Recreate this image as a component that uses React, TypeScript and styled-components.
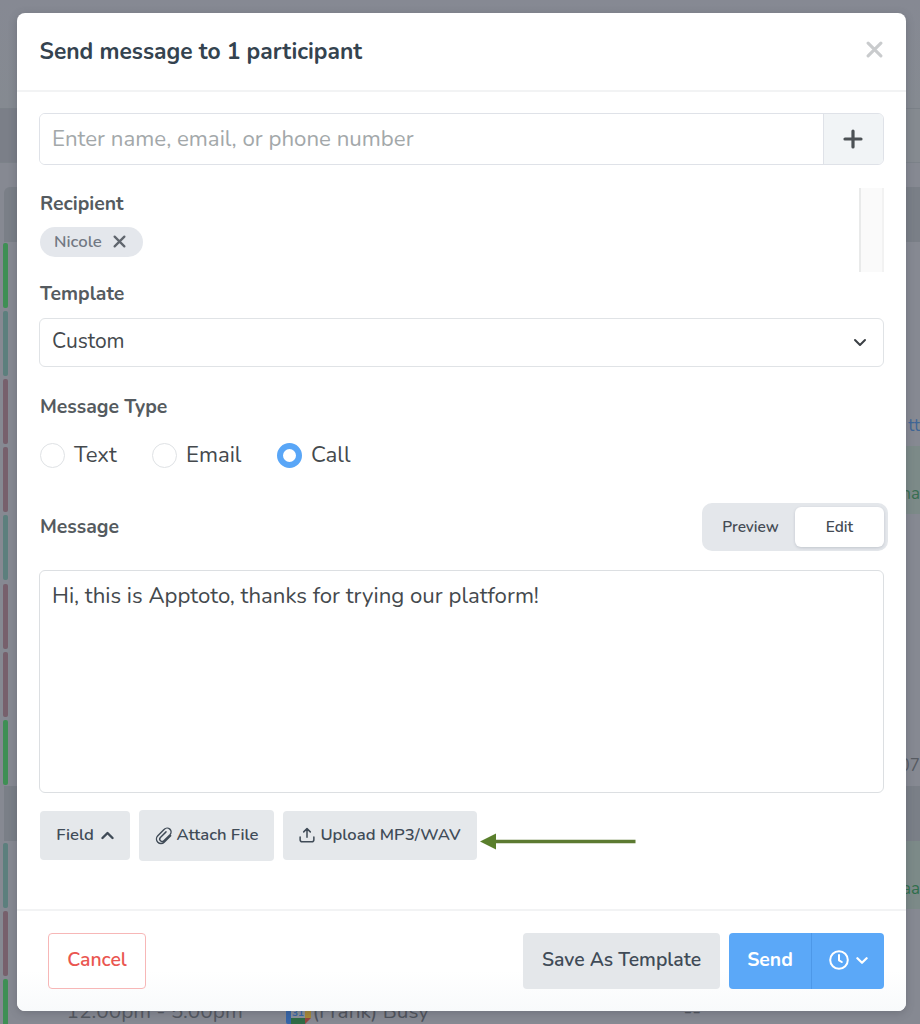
import React from 'react';
import styled, { createGlobalStyle } from 'styled-components';

const GlobalStyle = createGlobalStyle`
  * { box-sizing: border-box; }
  body { margin: 0; background: #868992; }
  body, button, input, textarea { font-family: Nunito, Lato, "Open Sans", sans-serif; }
  button { cursor: pointer; margin: 0; }
`;

const Page = styled.div`
  position: relative;
  width: 920px;
  height: 1024px;
  overflow: hidden;
  background: #868992;
`;

/* calendar page behind the dialog */
const Agenda = styled.div`
  display: flex;
  flex-direction: column;
  height: 1024px;
`;
const TopSpace = styled.div`
  flex: none;
  height: 108px;
  background: linear-gradient(180deg, #868993, #858a91);
`;
const Toolbar = styled.div`
  flex: none;
  height: 55px;
  background: linear-gradient(90deg, #7b7f88 0 500px, #858a90 500px);
  border-top: 1px solid #7b8188;
  border-bottom: 1px solid #7c8289;
`;
const Gap = styled.div`
  flex: none;
  height: 23.5px;
`;
const DayBand = styled.div<{ $first?: boolean }>`
  flex: none;
  height: 55px;
  margin-left: 4px;
  border-radius: ${p => (p.$first ? '6px 0 0 0' : 0)};
  background: #7a7f87;
`;
const EventRow = styled.div<{ $tint?: boolean }>`
  flex: none;
  display: flex;
  align-items: center;
  height: 68.1px;
  padding: 1px 0 1px 3px;
  background: ${p => (p.$tint ? 'linear-gradient(90deg, transparent 500px, #7c8a88 500px)' : 'transparent')};
`;
const Stripe = styled.i<{ $color: string }>`
  width: 4.5px;
  height: 65px;
  border-radius: 2px;
  background: ${p => p.$color};
`;
const EventTime = styled.span`
  width: 218px;
  padding-left: 59px;
  font-size: 20.8px;
  color: #53575f;
  white-space: nowrap;
`;
const EventTitle = styled.span`
  display: flex;
  align-items: center;
  gap: 2px;
  width: 398px;
  margin-left: 60px;
  font-size: 20.8px;
  color: #4f535b;
`;
const EventEnd = styled.span`
  font-size: 20.8px;
  color: #4f535b;
`;
const EventNote = styled.span<{ $color: string }>`
  margin: 27px 0 0 auto;
  font-size: 17px;
  color: ${p => p.$color};
  white-space: nowrap;
`;

/* dialog */
const Dialog = styled.section`
  position: absolute;
  left: 17px;
  top: 13px;
  width: 889px;
  height: 998px;
  display: flex;
  flex-direction: column;
  background: #fff;
  border-radius: 8px;
  box-shadow: 0 2px 8px rgba(60, 64, 72, 0.3);
`;
const Header = styled.header`
  flex: none;
  display: flex;
  align-items: center;
  justify-content: space-between;
  height: 79px;
  padding: 0 23px 3px;
  border-bottom: 2px solid #f2f3f4;
`;
const Title = styled.h1`
  margin: 3px 0 0 -0.5px;
  font-size: 22.8px;
  font-weight: 700;
  line-height: 30px;
  color: #34434f;
`;
const Close = styled.button`
  display: flex;
  padding: 0;
  margin: 0 0 2px 0;
  border: 0;
  background: none;
`;
const Body = styled.div`
  flex: none;
  display: flex;
  flex-direction: column;
  height: 817px;
  padding: 21px 22px 0 22px;
`;
const InputGroup = styled.div`
  display: flex;
  height: 52px;
  border: 1px solid #dfe2e8;
  border-radius: 6px;
  overflow: hidden;
`;
const NameInput = styled.input`
  flex: 1;
  min-width: 0;
  padding: 0 12px 1px;
  border: 0;
  outline: 0;
  font-size: 22.25px;
  color: #3e4347;
  &::placeholder { color: #a3a8aa; opacity: 1; }
`;
const AddButton = styled.button`
  display: flex;
  align-items: center;
  justify-content: center;
  width: 60px;
  padding: 0 1px 0 0;
  border: 0;
  border-left: 1px solid #dfe2e8;
  background: #f1f4f6;
`;
const Recipients = styled.div`
  display: flex;
  justify-content: space-between;
  height: 84px;
  margin-top: 23px;
`;
const ScrollTrack = styled.div`
  width: 25px;
  background: #fafafa;
  border-left: 2px solid #e9eaea;
  border-right: 2px solid #f2f2f2;
`;
const Label = styled.div`
  font-size: 19.4px;
  font-weight: 700;
  line-height: 26px;
  color: #555b60;
`;
const RecipientList = styled.div`
  padding: 3px 0 0 1px;
`;
const Chip = styled.span`
  display: flex;
  align-items: center;
  justify-content: space-between;
  width: 103px;
  height: 30px;
  margin-top: 10px;
  padding: 0 17px 2px 14px;
  border-radius: 15px;
  background: #e4e7ec;
  font-size: 16.8px;
  font-weight: 600;
  color: #717883;
`;
const TemplateField = styled.div`
  margin-top: 9px;
`;
const Indent = styled.div`
  padding-left: 1px;
`;
const Select = styled.button`
  display: flex;
  align-items: center;
  justify-content: space-between;
  width: 100%;
  height: 49px;
  margin-top: 11px;
  padding: 0 16px 3px 12px;
  border: 1px solid #e0e3e6;
  border-radius: 6px;
  background: #fff;
  font-size: 21px;
  color: #44494d;
  & > svg { margin-top: 2px; }
`;
const TypeField = styled.div`
  margin-top: 27px;
  padding-left: 1px;
`;
const Radios = styled.div`
  display: flex;
  height: 28px;
  margin-top: 21px;
`;
const Option = styled.label<{ $width: number }>`
  display: flex;
  align-items: center;
  gap: 9px;
  width: ${p => p.$width}px;
  font-size: 22.2px;
  line-height: 26px;
  color: #44494d;
`;
const Dot = styled.i<{ $checked?: boolean }>`
  flex: none;
  width: 25px;
  height: 25px;
  margin-top: 1px;
  border-radius: 50%;
  background: #fff;
  border: ${p => (p.$checked ? '6.5px solid #59a6f7' : '1px solid #dfe2e5')};
`;
const MessageHead = styled.div`
  display: flex;
  align-items: center;
  justify-content: space-between;
  height: 48px;
  margin: 34px -4px 0 1px;
`;
const Toggle = styled.div`
  display: flex;
  width: 186px;
  height: 48px;
  padding: 4px;
  border-radius: 10px;
  background: #e4e7eb;
`;
const ToggleItem = styled.button<{ $active?: boolean }>`
  width: 89px;
  padding: 0 0 2px;
  border: 0;
  border-radius: 6px;
  background: ${p => (p.$active ? '#fff' : 'transparent')};
  box-shadow: ${p => (p.$active ? '0 1px 3px rgba(60, 70, 90, 0.2)' : 'none')};
  font-size: 15.4px;
  font-weight: 600;
  color: #444b54;
`;
const MessageBox = styled.textarea`
  flex: none;
  display: block;
  width: 100%;
  height: 223px;
  margin: 19px 0 0;
  padding: 11px 12px;
  border: 1px solid #dcdfe2;
  border-radius: 6px;
  outline: 0;
  resize: none;
  font-size: 22.2px;
  line-height: 28px;
  color: #44494d;
`;
const Tools = styled.div`
  display: flex;
  align-items: center;
  gap: 9px;
  height: 51px;
  margin: 17px 0 0 1px;
`;
const ToolButton = styled.button<{ $width: number; $gap: number; $tall?: boolean }>`
  display: flex;
  align-items: center;
  justify-content: center;
  gap: ${p => p.$gap}px;
  width: ${p => p.$width}px;
  height: ${p => (p.$tall ? 51 : 49)}px;
  padding: ${p => (p.$tall ? '0 0 2px' : '0 0 3px')};
  border: 0;
  border-radius: 4px;
  background: #e5e8eb;
  font-size: 16.6px;
  font-weight: 600;
  color: #404b57;
  white-space: nowrap;
  & > svg { margin-top: 2px; }
`;
const Arrow = styled.svg`
  margin: 12px 0 0 -6px;
`;
const Footer = styled.footer`
  flex: 1;
  display: flex;
  align-items: flex-start;
  padding: 22px 22px 0 31px;
  border-top: 2px solid #f2f3f4;
  border-radius: 0 0 8px 8px;
  background: linear-gradient(180deg, #fff 60%, #f8fafb);
`;
const FooterButton = styled.button<{ $width: number; $kind: 'danger' | 'plain' | 'primary' }>`
  display: flex;
  align-items: center;
  justify-content: center;
  gap: 7px;
  width: ${p => p.$width}px;
  height: 56px;
  padding: 0 0 3px;
  border: ${p => (p.$kind === 'danger' ? '1px solid #f7b7b7' : '0')};
  border-radius: 4px;
  background: ${p => ({ danger: '#fff', plain: '#e4e7ea', primary: '#5ba8f8' })[p.$kind]};
  color: ${p => ({ danger: '#ea5650', plain: '#404b57', primary: '#fff' })[p.$kind]};
  font-size: 19.4px;
  font-weight: ${p => (p.$kind === 'primary' ? 700 : 600)};
  & > svg { margin-top: 1px; }
`;
const Actions = styled.div`
  display: flex;
  margin-left: auto;
`;
const SendGroup = styled.div`
  display: flex;
  margin-left: 9px;
  border-radius: 4px;
  overflow: hidden;
  & > button { border-radius: 0; }
  & > button + button { border-left: 1px solid #4d98e8; }
`;

const Cross = ({ size, color, width }: { size: number; color: string; width: number }) => (
  <svg width={size} height={size} viewBox="0 0 16 16" fill="none" stroke={color} strokeWidth={width} strokeLinecap="round">
    <path d="M2 2L14 14M14 2L2 14" />
  </svg>
);
const Chevron = ({ up, width = 13, color, stroke = 2 }: { up?: boolean; width?: number; color: string; stroke?: number }) => (
  <svg width={width} height={9} viewBox="0 0 13 9" fill="none" stroke={color} strokeWidth={stroke} strokeLinecap="round" strokeLinejoin="round">
    <path d={up ? 'M1.5 7L6.5 2L11.5 7' : 'M1.5 2L6.5 7L11.5 2'} />
  </svg>
);
const ClipIcon = () => (
  <svg width="18" height="18" viewBox="0 0 24 24" fill="none" stroke="#404b57" strokeWidth="1.9" strokeLinecap="round" strokeLinejoin="round">
    <path d="M20.9 11.6L12.25 20.24A5.6 5.6 0 0 1 3.76 11.75L12.4 3.1A5.1 5.1 0 0 1 20 10.2L11.8 18.3A3 3 0 0 1 7.2 13.9L14.7 6.5" />
  </svg>
);
const UploadIcon = () => (
  <svg width="16" height="16" viewBox="0 0 17 17" fill="none" stroke="#404b57" strokeWidth="1.6" strokeLinecap="round" strokeLinejoin="round">
    <path d="M8.5 11V2M5 5.2L8.5 1.7L12 5.2M1.2 10.5V13.5Q1.2 15.7 3.4 15.7H13.6Q15.8 15.7 15.8 13.5V10.5" />
  </svg>
);
const ClockIcon = () => (
  <svg width="20" height="20" viewBox="0 0 20 20" fill="none" stroke="#fff" strokeWidth="2" strokeLinecap="round" strokeLinejoin="round">
    <circle cx="10" cy="10" r="8.8" />
    <path d="M10 5V10.3L12.8 12" />
  </svg>
);
const CalendarIcon = () => (
  <svg width="25" height="25" viewBox="0 0 25 25">
    <rect x="0" y="0" width="20" height="25" rx="2" fill="#3565a8" />
    <rect x="19" y="0" width="6" height="19" fill="#a98a35" />
    <path d="M5 19H19V25H5Z" fill="#2f6b45" />
    <path d="M19 19H25L19 25Z" fill="#96453f" />
    <rect x="5" y="5" width="14" height="14" fill="#8d929b" />
    <text x="12" y="16.5" fontSize="10" fontWeight="700" textAnchor="middle" fill="#3565a8">31</text>
  </svg>
);

const GREEN = '#3f8f54';
const TEAL = '#5c7f7d';
const MAROON = '#77606c';

type AgendaEvent = { color: string; note?: string; noteColor?: string; tint?: boolean };
const morning: AgendaEvent[] = [
  { color: GREEN },
  { color: TEAL },
  { color: MAROON, note: 'tt', noteColor: '#3f6696' },
  { color: MAROON, note: 'na', noteColor: '#376e51', tint: true },
  { color: TEAL },
  { color: MAROON },
  { color: MAROON },
  { color: GREEN, note: '07', noteColor: '#575b62' },
];
const evening: AgendaEvent[] = [
  { color: TEAL, note: 'aa', noteColor: '#2f6f4c', tint: true },
  { color: MAROON },
];

const renderEvent = (e: AgendaEvent, i: number) => (
  <EventRow key={i} $tint={e.tint}>
    <Stripe $color={e.color} />
    {e.note && <EventNote $color={e.noteColor!}>{e.note}</EventNote>}
  </EventRow>
);

export default function App() {
  return (
    <Page>
      <GlobalStyle />
      <Agenda>
        <TopSpace />
        <Toolbar />
        <Gap />
        <DayBand $first />
        {morning.map(renderEvent)}
        <DayBand />
        {evening.map(renderEvent)}
        <EventRow>
          <Stripe $color={GREEN} />
          <EventTime>12:00pm - 5:00pm</EventTime>
          <EventTitle><CalendarIcon />(Frank) Busy</EventTitle>
          <EventEnd>--</EventEnd>
        </EventRow>
      </Agenda>

      <Dialog>
        <Header>
          <Title>Send message to 1 participant</Title>
          <Close><Cross size={17} color="#c9cbcd" width={2.9} /></Close>
        </Header>

        <Body>
          <InputGroup>
            <NameInput placeholder="Enter name, email, or phone number" />
            <AddButton>
              <svg width="20" height="20" viewBox="0 0 20 20" stroke="#4c5155" strokeWidth="3.2" strokeLinecap="round">
                <path d="M10 2V18M2 10H18" />
              </svg>
            </AddButton>
          </InputGroup>

          <Recipients>
            <RecipientList>
              <Label>Recipient</Label>
              <Chip>Nicole <Cross size={13} color="#60666e" width={2.8} /></Chip>
            </RecipientList>
            <ScrollTrack />
          </Recipients>

          <TemplateField>
            <Indent><Label>Template</Label></Indent>
            <Select>Custom <Chevron color="#3b4045" width={14} /></Select>
          </TemplateField>

          <TypeField>
            <Label>Message Type</Label>
            <Radios>
              <Option $width={112}><Dot />Text</Option>
              <Option $width={125}><Dot />Email</Option>
              <Option $width={90}><Dot $checked />Call</Option>
            </Radios>
          </TypeField>

          <MessageHead>
            <Label>Message</Label>
            <Toggle>
              <ToggleItem>Preview</ToggleItem>
              <ToggleItem $active>Edit</ToggleItem>
            </Toggle>
          </MessageHead>

          <MessageBox defaultValue="Hi, this is Apptoto, thanks for trying our platform!" />

          <Tools>
            <ToolButton $width={90} $gap={7}>Field <Chevron up color="#404b57" stroke={2.4} /></ToolButton>
            <ToolButton $width={135} $gap={4} $tall><ClipIcon />Attach File</ToolButton>
            <ToolButton $width={194} $gap={5}><UploadIcon />Upload MP3/WAV</ToolButton>
            <Arrow width="156" height="17" viewBox="0 0 156 17">
              <path d="M12 8.5H155.5" stroke="#5c7a31" strokeWidth="3.4" />
              <path d="M0 8.5L16 0.5V16.5Z" fill="#5a7f2c" />
            </Arrow>
          </Tools>
        </Body>

        <Footer>
          <FooterButton $width={98} $kind="danger">Cancel</FooterButton>
          <Actions>
            <FooterButton $width={197} $kind="plain">Save As Template</FooterButton>
            <SendGroup>
              <FooterButton $width={82} $kind="primary">Send</FooterButton>
              <FooterButton $width={73} $kind="primary"><ClockIcon /><Chevron color="#fff" stroke={2.4} width={12} /></FooterButton>
            </SendGroup>
          </Actions>
        </Footer>
      </Dialog>
    </Page>
  );
}
